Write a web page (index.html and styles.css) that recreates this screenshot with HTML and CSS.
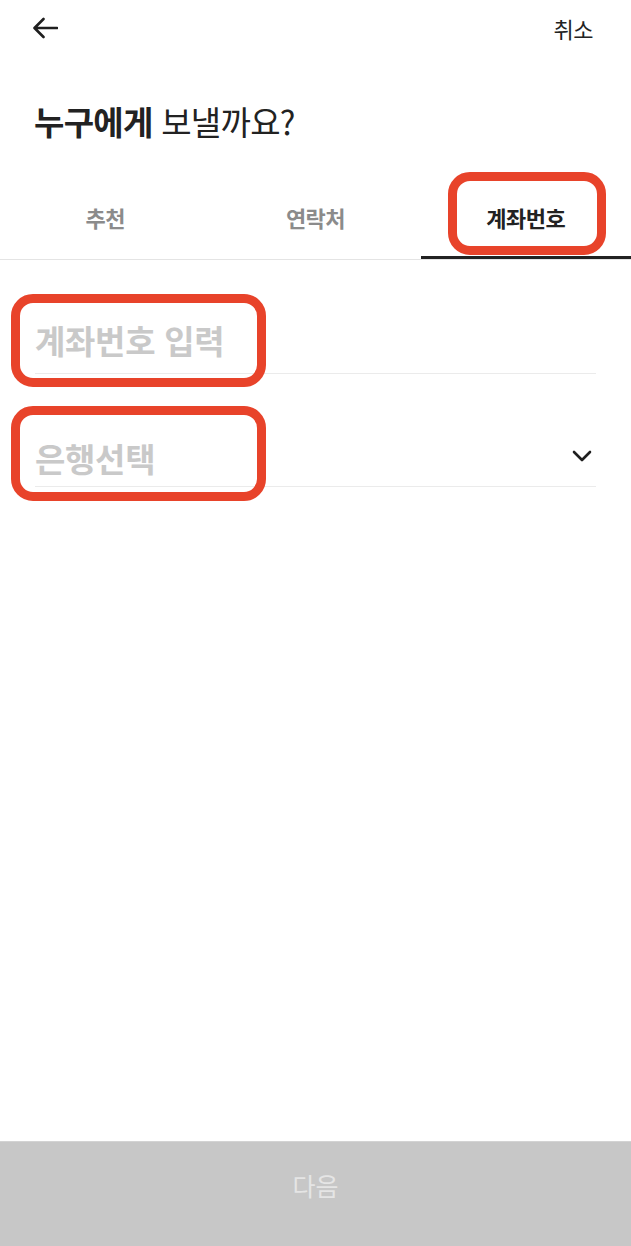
FILE: index.html
```html
<!DOCTYPE html>
<html lang="ko">
<head>
<meta charset="utf-8">
<title>누구에게 보낼까요?</title>
<link rel="stylesheet" href="styles.css">
</head>
<body>
<div class="page">
  <header class="topbar">
    <svg class="back" width="26" height="22" viewBox="0 0 26 22" aria-hidden="true">
      <path d="M25 11H3M11.5 2L2.5 11l9 9" fill="none" stroke="#1f1f1f" stroke-width="2.6" stroke-linecap="round" stroke-linejoin="round"/>
    </svg>
    <span class="cancel">취소</span>
  </header>

  <h1 class="title"><b>누구에게</b> 보낼까요?</h1>

  <nav class="tabs">
    <div class="tab">추천</div>
    <div class="tab">연락처</div>
    <div class="tab tab-active">계좌번호</div>
  </nav>

  <section class="form">
    <div class="field field-account">
      <span class="placeholder">계좌번호 입력</span>
    </div>
    <div class="field field-bank">
      <span class="placeholder">은행선택</span>
      <svg class="chevron" width="20" height="12" viewBox="0 0 20 12" aria-hidden="true">
        <path d="M2 2l8 8 8-8" fill="none" stroke="#1f1f1f" stroke-width="2.6" stroke-linecap="round" stroke-linejoin="round"/>
      </svg>
    </div>
  </section>

  <button class="next">다음</button>

  <div class="mark mark-tab"></div>
  <div class="mark mark-account"></div>
  <div class="mark mark-bank"></div>
</div>
</body>
</html>
```

FILE: styles.css
```css
* { box-sizing: border-box; }
html, body { margin: 0; padding: 0; background: #ffffff; }
body {
  font-family: "Noto Sans CJK KR", "Noto Sans", sans-serif;
  color: #222222;
}
.page {
  position: relative;
  width: 631px;
  height: 1246px;
  display: flex;
  flex-direction: column;
  overflow: hidden;
}
.topbar {
  height: 56px;
  display: flex;
  align-items: center;
  justify-content: space-between;
  padding: 0 38px 0 32px;
}
.back { display: block; }
.cancel {
  font-size: 22px;
  line-height: 30px;
  color: #222222;
  letter-spacing: -0.5px;
}
.title {
  margin: 45px 0 0 0;
  padding-left: 34px;
  font-size: 33px;
  line-height: 40px;
  font-weight: 400;
  letter-spacing: -0.7px;
  color: #222222;
}
.title b { font-weight: 700; }
.tabs {
  margin-top: 34px;
  display: grid;
  grid-template-columns: 1fr 1fr 1fr;
  border-bottom: 1px solid #e4e4e4;
}
.tab {
  height: 84px;
  display: flex;
  align-items: center;
  justify-content: center;
  padding-bottom: 1px;
  font-size: 22px;
  font-weight: 700;
  color: #8b8b8b;
  letter-spacing: -0.5px;
}
.tab-active {
  color: #222222;
  box-shadow: inset 0 -3px 0 #222222;
}
.form {
  padding: 0 35px 0 35px;
}
.field {
  display: flex;
  align-items: center;
  justify-content: space-between;
  border-bottom: 1px solid #ebebeb;
  line-height: 44px;
}
.field-account {
  margin-top: 58px;
  padding-bottom: 11px;
}
.field-bank {
  margin-top: 62px;
  padding-bottom: 6px;
}
.placeholder {
  font-size: 33px;
  font-weight: 700;
  color: #c9c9c9;
  letter-spacing: -0.3px;
}
.chevron {
  display: block;
  margin-right: 4px;
  margin-top: -4px;
}
.next {
  margin-top: auto;
  height: 105px;
  width: 100%;
  border: 0;
  border-top: 1px solid #d3d3d3;
  background: #c7c7c7;
  color: #e5e5e5;
  font-family: inherit;
  font-size: 25px;
  font-weight: 400;
  line-height: 36px;
  padding: 25px 0 0 0;
  display: flex;
  justify-content: center;
  align-items: flex-start;
}
.mark {
  position: absolute;
  border: 9px solid #e8432a;
  border-radius: 22px;
  pointer-events: none;
}
.mark-tab { left: 448px; top: 172px; width: 158px; height: 83px; }
.mark-account { left: 11px; top: 294px; width: 255px; height: 93px; }
.mark-bank { left: 11px; top: 406px; width: 255px; height: 95px; }
```
